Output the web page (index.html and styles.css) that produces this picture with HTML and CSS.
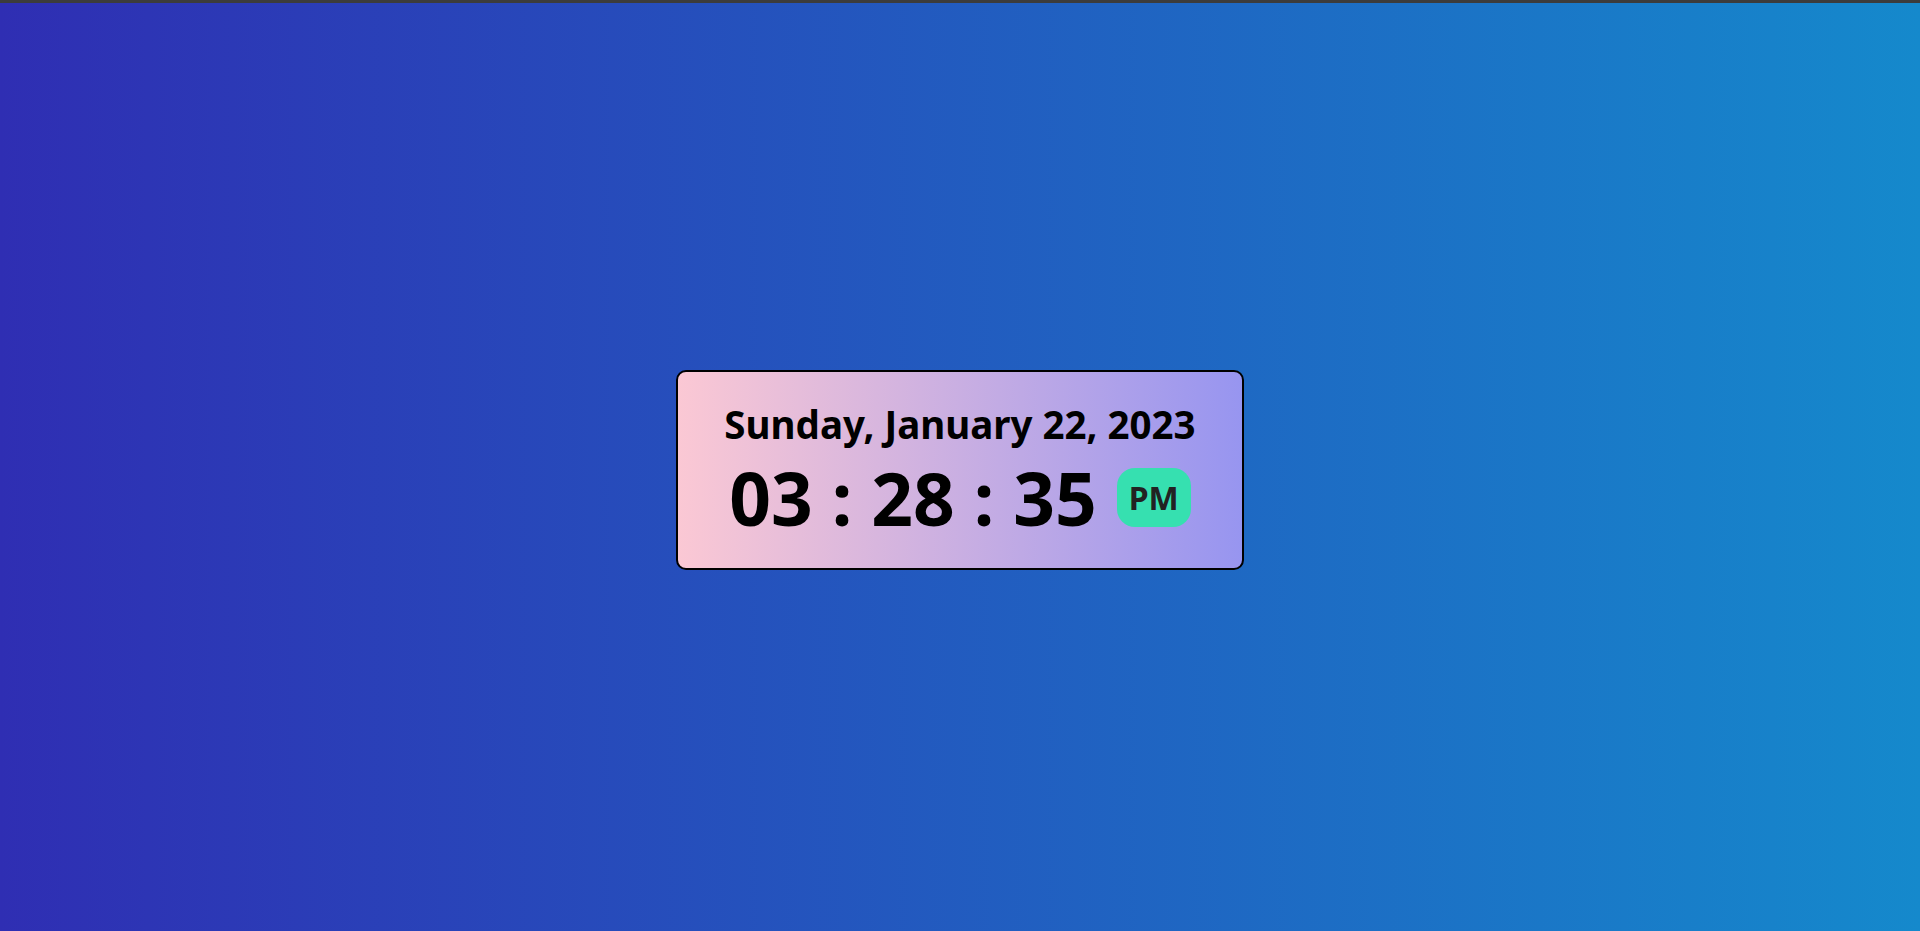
FILE: index.html
```html
<!DOCTYPE html>
<html lang="en">
<head>
<meta charset="utf-8">
<title>Clock</title>
<link rel="stylesheet" href="styles.css">
</head>
<body>
<div class="topbar"></div>
<main class="stage">
  <div class="card">
    <div class="date">Sunday, January 22, 2023</div>
    <div class="time-row">
      <span class="time">03 : 28 : 35</span>
      <span class="ampm">PM</span>
    </div>
  </div>
</main>
</body>
</html>
```
FILE: styles.css
```css
* { box-sizing: border-box; }
html, body { margin: 0; padding: 0; height: 100%; }
body {
  font-family: "Noto Sans", "Open Sans", sans-serif;
  background: linear-gradient(to right, #2f2eb3, #1589cc);
  display: flex;
  flex-direction: column;
  overflow: hidden;
}
.topbar {
  height: 3px;
  background: #3c3c3c;
  flex: none;
}
.stage {
  flex: 1;
  display: flex;
  align-items: center;
  justify-content: center;
  padding-top: 6px;
}
.card {
  width: 568px;
  height: 200px;
  border: 2px solid #000;
  border-radius: 10px;
  background: linear-gradient(to right, #fbc8d4, #9795f0);
  display: flex;
  flex-direction: column;
  align-items: center;
  justify-content: flex-start;
  padding-top: 33px;
  gap: 17px;
}
.date {
  font-size: 38.5px;
  font-weight: 700;
  color: #000;
  line-height: 1;
  white-space: nowrap;
}
.time-row {
  display: flex;
  align-items: center;
  gap: 20px;
  height: 73px;
}
.time {
  font-size: 73px;
  font-weight: 700;
  color: #000;
  line-height: 1;
  white-space: nowrap;
}
.ampm {
  background: #36e0b0;
  color: #222;
  font-size: 32px;
  font-weight: 700;
  width: 74px;
  height: 59px;
  border-radius: 18px;
  display: flex;
  align-items: center;
  justify-content: center;
}
```
